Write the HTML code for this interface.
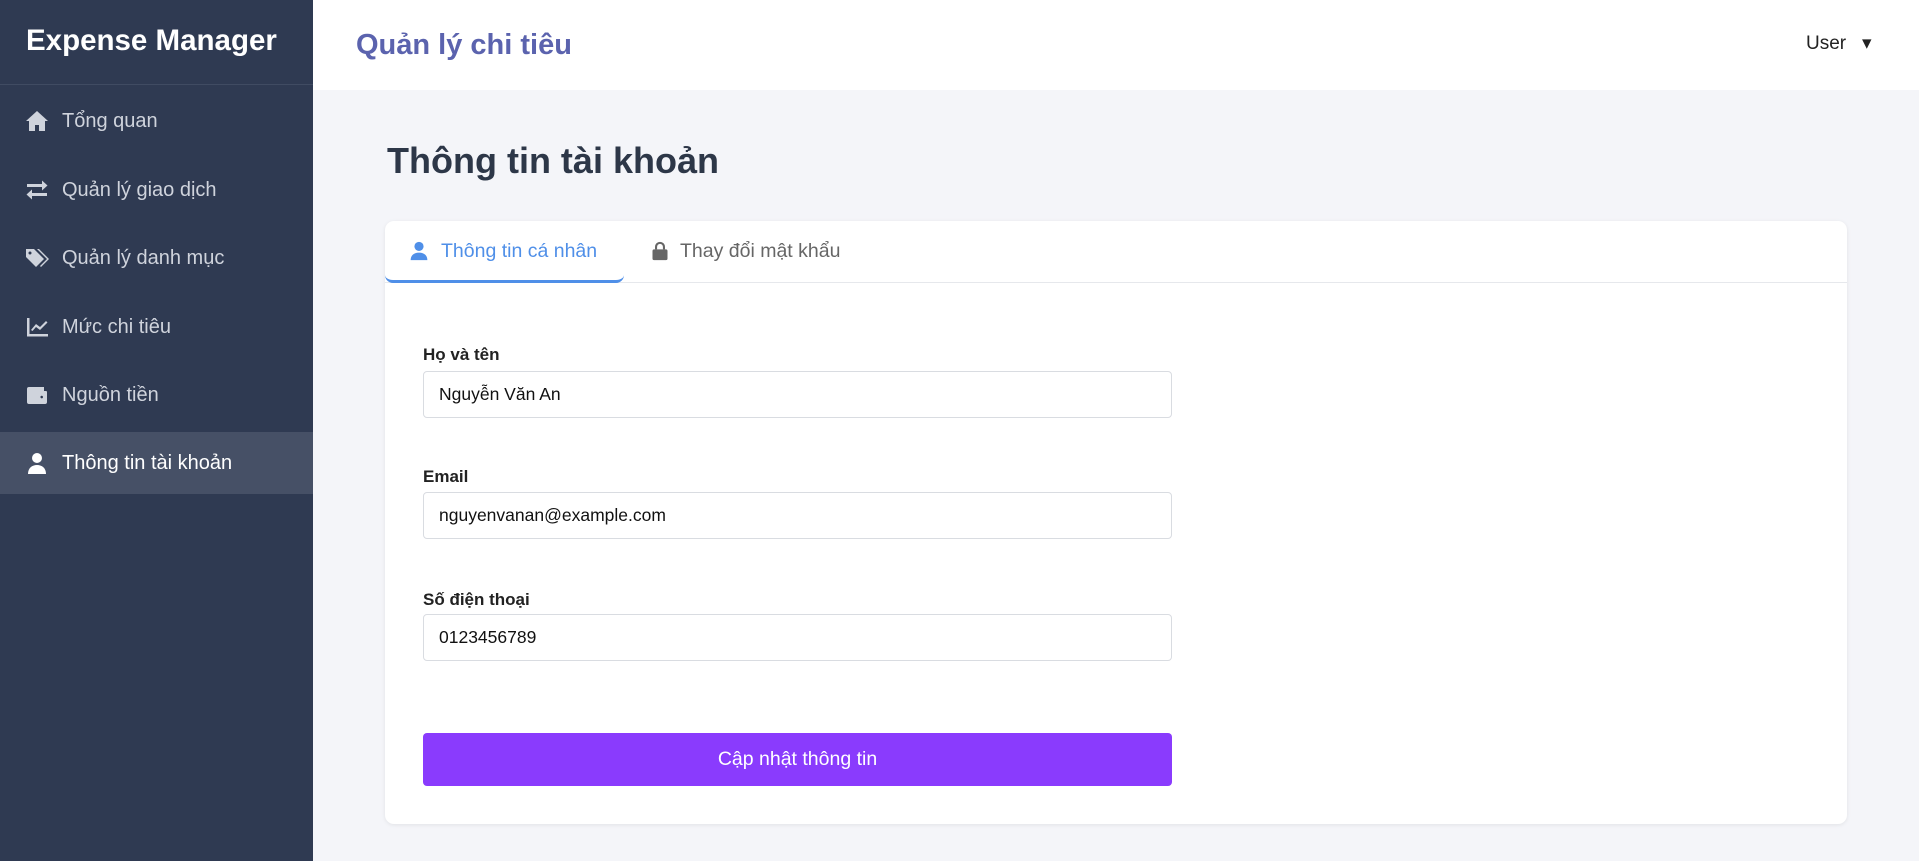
<!DOCTYPE html>
<html><head><meta charset="utf-8"><style>
*{box-sizing:border-box;margin:0;padding:0}
body{width:1919px;height:861px;overflow:hidden;font-family:"Liberation Sans",Arial,sans-serif;background:#f4f5f9;position:relative}
.sb{position:absolute;left:0;top:0;width:313px;height:861px;background:#2f3a52}
.sb h1{height:85px;border-bottom:1px solid #404b62;color:#fff;font-size:29.5px;font-weight:bold;padding-left:26px;line-height:82px}
.nav{position:absolute;left:0;width:313px;height:62px;display:flex;align-items:center;color:#cfd3dc;font-size:20px}
.nav svg{position:absolute;left:25px;width:24px;height:24px;fill:#cfd3dc}
.nav span{position:absolute;left:62px}
.nav.act{background:#465066;color:#fff}
.nav.act svg{fill:#fff}
.top{position:absolute;left:313px;top:0;right:0;height:90px;background:#fff}
.top .t{position:absolute;left:43px;top:29px;font-size:29px;font-weight:bold;color:#5b63ae}
.top .u{position:absolute;left:1493px;top:32px;font-size:19px;color:#222}
h2{position:absolute;left:387px;top:140px;font-size:36px;color:#2d3748;font-weight:bold}
.card{position:absolute;left:385px;top:221px;width:1462px;height:603px;background:#fff;border-radius:9px;box-shadow:0 1px 4px rgba(0,0,0,.08)}
.tabs{position:absolute;left:0;top:0;right:0;height:62px;border-bottom:1px solid #e6e8ec}
.tab{position:absolute;top:0;height:62px;font-size:19.5px;line-height:60px}
.tab1{left:0;width:239px;color:#4f8fe8;border-bottom:3px solid #4f8fe8;border-radius:0 0 8px 8px}
.tab2{left:265px;color:#666}
.tab svg{position:absolute;top:19px;width:20px;height:22px}
label{position:absolute;left:38px;font-size:17px;font-weight:bold;color:#222}
.in{position:absolute;left:38px;width:749px;height:47px;border:1px solid #d9dce1;border-radius:4px;font-size:17.5px;color:#111;padding-left:15px;line-height:45px}
.btn{position:absolute;left:38px;top:512px;width:749px;height:53px;background:#8a3bfd;border-radius:4px;color:#fff;font-size:19.5px;text-align:center;line-height:53px}
</style></head><body>
<div class="sb"><h1>Expense Manager</h1>
<div class="nav" style="top:90px"><svg viewBox="0 0 24 24"><path d="M12 2 1 12h3v10h6v-6h4v6h6V12h3z"/></svg><span>Tổng quan</span></div>
<div class="nav" style="top:159px"><svg viewBox="0 0 24 24"><path d="M2 6h15V2.5l5.5 5L17 12.5V9H2zM22 15H7v-3.5l-5.5 5L7 21.5V18h15z"/></svg><span>Quản lý giao dịch</span></div>
<div class="nav" style="top:227px"><svg viewBox="0 0 24 24"><path d="M1 3v8l10 10 8-8L9 3zm4 2.5a1.5 1.5 0 1 1 0 3 1.5 1.5 0 0 1 0-3zM12 3h2l10 10-8 8-1-1 7-7z"/></svg><span>Quản lý danh mục</span></div>
<div class="nav" style="top:296px"><svg viewBox="0 0 24 24"><path d="M2 3h2.5v16H23v2.5H2zM6 15l5-6 4 3 6-6 1.5 1.5-7.5 7.5-4-3-3.5 4z"/></svg><span>Mức chi tiêu</span></div>
<div class="nav" style="top:364px"><svg viewBox="0 0 24 24"><path d="M2 6a2 2 0 0 1 2-2h15v4h2a1 1 0 0 1 1 1v10a2 2 0 0 1-2 2H4a2 2 0 0 1-2-2zm16 8a1.3 1.3 0 1 0 0 .1z"/></svg><span>Nguồn tiền</span></div>
<div class="nav act" style="top:432px"><svg viewBox="0 0 24 24"><circle cx="12" cy="7" r="5"/><path d="M3 23c0-6 4-9 9-9s9 3 9 9z"/></svg><span>Thông tin tài khoản</span></div>
</div>
<div class="top"><div class="t">Quản lý chi tiêu</div><div class="u">User &nbsp;&nbsp;▾</div></div>
<h2>Thông tin tài khoản</h2>
<div class="card">
<div class="tabs">
<div class="tab tab1"><svg viewBox="0 0 24 24" style="left:24px" fill="#4f8fe8"><circle cx="12" cy="6.5" r="5.5"/><path d="M2 23c0-6 4-9 10-9s10 3 10 9z"/></svg><span style="position:absolute;left:56px;white-space:nowrap">Thông tin cá nhân</span></div>
<div class="tab tab2"><svg viewBox="0 0 24 24" style="left:0" fill="#666"><path d="M6 10V7a6 6 0 0 1 12 0v3h-2.5V7a3.5 3.5 0 0 0-7 0v3z"/><rect x="3" y="10" width="18" height="13" rx="2"/></svg><span style="position:absolute;left:30px;white-space:nowrap">Thay đổi mật khẩu</span></div>
</div>
<label style="top:124px">Họ và tên</label><div class="in" style="top:150px">Nguyễn Văn An</div>
<label style="top:246px">Email</label><div class="in" style="top:271px">nguyenvanan@example.com</div>
<label style="top:369px">Số điện thoại</label><div class="in" style="top:393px">0123456789</div>
<div class="btn">Cập nhật thông tin</div>
</div>
</body></html>
